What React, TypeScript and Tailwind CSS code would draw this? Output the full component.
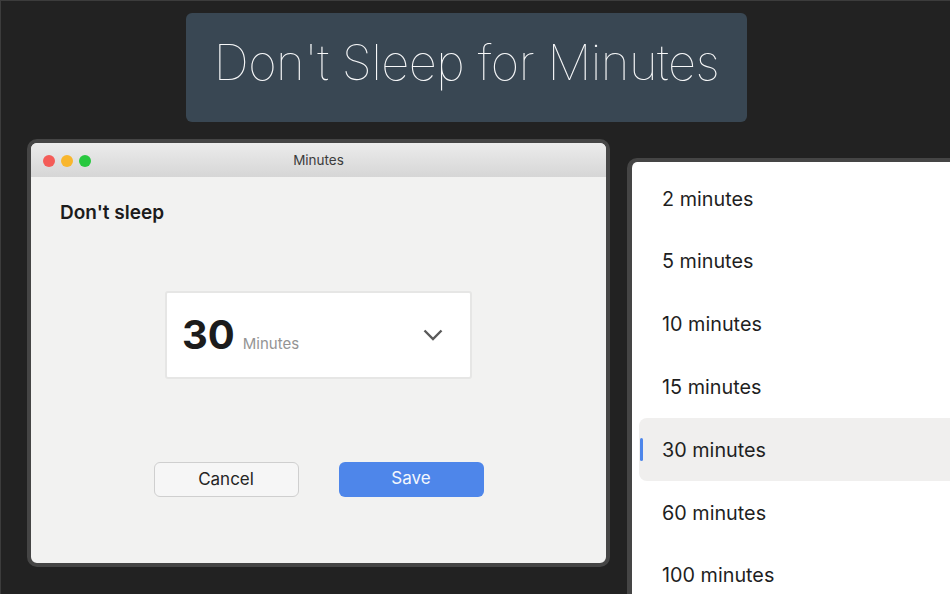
const minutes = [2, 5, 10, 15, 30, 60, 100];

function TrafficLights() {
  return (
    <div className="flex items-center gap-[6.2px]">
      <div className="h-[12px] w-[12px] rounded-full bg-[#f45c58]" />
      <div className="h-[12px] w-[12px] rounded-full bg-[#f8b62d]" />
      <div className="h-[12px] w-[12px] rounded-full bg-[#28c83f]" />
    </div>
  );
}

function MinutesWindow() {
  return (
    <div className="h-[428px] w-[583px] shrink-0 rounded-[10px] border-4 border-[#454545] bg-[#f2f2f1]">
      <div className="relative flex h-[34px] items-center justify-center rounded-t-[6px] bg-gradient-to-b from-[#ececec] to-[#d6d6d6] pt-[1px]">
        <div className="absolute left-[12px] top-[11.5px]">
          <TrafficLights />
        </div>
        <span className="text-[13.5px] text-[#3c3c3c]">Minutes</span>
      </div>

      <div className="px-[29px] pt-[24px] text-[19px] font-semibold leading-[24px] text-[#1c1c1c]">Don't sleep</div>

      <div className="mt-[66px] flex justify-center">
        <div className="flex h-[88px] w-[307px] items-center rounded-[3px] border-2 border-[#e6e6e5] bg-white pl-[15px] pr-[27.5px]">
          <span className="text-[40px] font-bold leading-none text-[#1c1c1c]">30</span>
          <span className="ml-[8px] mt-[18px] text-[15px] text-[#949494]">Minutes</span>
          <svg className="ml-auto" width="20" height="12" viewBox="0 0 20 12" fill="none" stroke="#5a5a5a" strokeWidth="2.4">
            <path d="M1.5 1.5 L10 10 L18.5 1.5" />
          </svg>
        </div>
      </div>

      <div className="mt-[83px] flex justify-center gap-[40px]">
        <div className="flex h-[35px] w-[145px] items-center justify-center rounded-[6px] border border-[#cfcfcf] bg-[#f6f6f6] text-[17px] text-[#242424]">
          Cancel
        </div>
        <div className="flex h-[35px] w-[145px] items-center justify-center rounded-[6px] bg-[#4e86ea] pb-[2px] text-[17px] text-[#f4f7fd]">
          Save
        </div>
      </div>
    </div>
  );
}

function MinutesList() {
  return (
    <div className="mt-[19px] h-[480px] grow rounded-l-[10px] border-y-4 border-l-[5px] border-[#454545] bg-white pl-[7px] pt-[5px]">
      {minutes.map((m) => (
        <div
          key={m}
          className={`relative flex h-[62.8px] items-center rounded-l-[8px] pl-[23px] pt-[2px] text-[19.8px] text-[#1f1f1f] ${m === 30 ? "bg-[#f0efee]" : ""}`}
        >
          {m === 30 && <div className="absolute left-[1px] top-[20px] h-[23px] w-[3px] rounded-full bg-[#4e86ea]" />}
          {m} minutes
        </div>
      ))}
    </div>
  );
}

export default function App() {
  return (
    <div className="h-[594px] w-[950px] overflow-hidden border-l border-t border-[#3c3c3c] bg-[#222222] font-['Inter',sans-serif]">
      <div className="ml-[185px] mt-[12px] flex h-[109px] w-[561px] items-center justify-center rounded-[6px] bg-[#394753] pb-[10px]">
        <h1 className="text-[49px] font-thin leading-none tracking-[-0.5px] text-[#f7f8f9]">Don't Sleep for Minutes</h1>
      </div>
      <div className="ml-[26px] mt-[17px] flex items-start gap-[17px]">
        <MinutesWindow />
        <MinutesList />
      </div>
    </div>
  );
}
